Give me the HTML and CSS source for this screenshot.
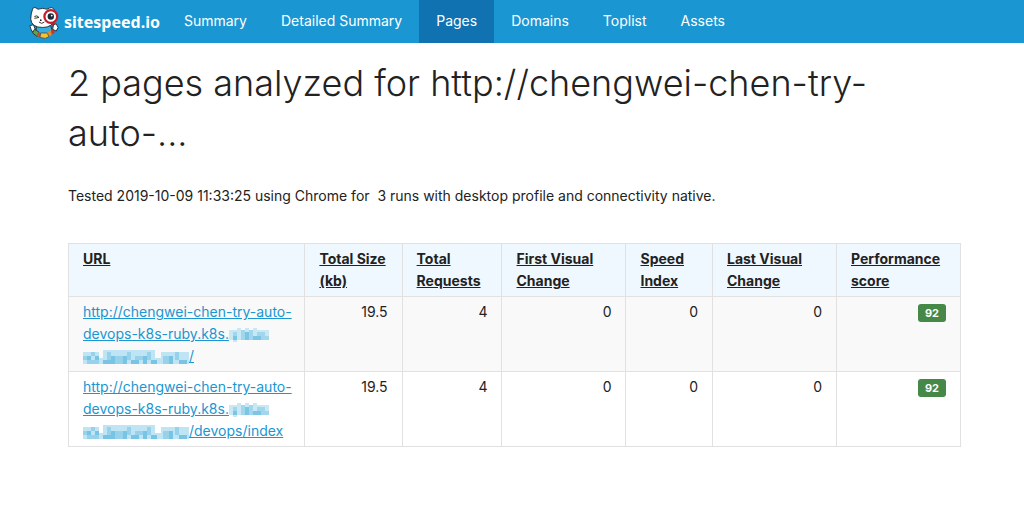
FILE: index.html
```
<!DOCTYPE html>
<html lang="en">
<head>
  <meta charset="UTF-8">
  <meta name="viewport" content="width=device-width, initial-scale=1.0">
  <title>2 pages analyzed - sitespeed.io</title>
  <link rel="stylesheet" href="styles.css">
</head>
<body>

  <nav class="navbar">
    <a href="#" class="brand">
      <svg class="logo" viewBox="0 0 34 36" aria-hidden="true">
        <path d="M6 21 L2 22 L4 28 L9 29 Z" fill="#fff" stroke="#1b3545" stroke-width="1"/>
        <path d="M10 22 H25 L27 30 Q18 35 8 30 Z" fill="#36aee0" stroke="#1b3545" stroke-width="1"/>
        <path d="M7 26 L12 29 L10 34 L5 30 Z" fill="#58a844" stroke="#333" stroke-width="1"/>
        <path d="M12 29 L15 31 L14 35 L9 33 Z" fill="#d8472a"/>
        <path d="M14 30 H21 L23 34 L19 36 L13 35 Z" fill="#f4c430" stroke="#555" stroke-width="1"/>
        <path d="M21 30 L25 27 L28 30 L24 34 Z" fill="#e68a28"/>
        <path d="M25 26 L29 25 L29 30 L26 32 Z" fill="#c9342a"/>
        <path d="M5 4 Q6 0 11 4 Q16 2 21 4 Q27 0 29 5 L29 15 Q27 24 16 24 Q4 24 3 15 Q3 9 5 4 Z" fill="#fff" stroke="#1b2b35" stroke-width="1"/>
        <path d="M7 12 Q10 10 12 13 L7 14 M12 18 Q15 21 18 18" fill="none" stroke="#222" stroke-width="1"/>
        <circle cx="14" cy="16" r="1" fill="#222"/>
        <path d="M27 18 L29 24" stroke="#c41c2c" stroke-width="3"/>
        <circle cx="25" cy="12" r="7" fill="#fff" stroke="#c41c2c" stroke-width="2.5"/>
        <circle cx="25" cy="12" r="3.5" fill="#1b2b35"/>
        <circle cx="26" cy="11" r="1" fill="#fff"/>
        <path d="M28 21 L31 20 L33 24 L31 28 L27 26 Z" fill="#fff" stroke="#1b2b35" stroke-width="1"/>
      </svg>
      <span>sitespeed.io</span>
    </a>
    <a href="#" class="nav-link">Summary</a>
    <a href="#" class="nav-link">Detailed Summary</a>
    <a href="#" class="nav-link active">Pages</a>
    <a href="#" class="nav-link">Domains</a>
    <a href="#" class="nav-link">Toplist</a>
    <a href="#" class="nav-link">Assets</a>
  </nav>

  <!-- mosaic blocks that hide part of the host name -->
  <svg class="sprite" aria-hidden="true">
    <symbol id="mosaic-short" viewBox="0 0 40 14">
      <path d="M0 2h40v10H0zM8 0h4v2H8zM16 0h4v2h-4zM24 0h4v2h-4zM4 12h4v2H4z" fill="#c8e8f4"/>
      <path d="M4 4h4v8H4zM12 2h4v10h-4zM20 2h4v10h-4zM28 4h8v8h-8zM36 8h4v4h-4z" fill="#a2d6ec"/>
      <path d="M4 8h4v4H4zM16 4h4v8h-4zM24 8h8v4h-8z" fill="#7cc5e4"/>
    </symbol>
    <symbol id="mosaic-long" viewBox="0 0 106 14">
      <path d="M0 2h16v12H0zM16 8h8v6h-8zM20 0h52v14H20zM72 8h6v6h-6zM78 2h28v12H78z" fill="#bfe4f3"/>
      <path d="M0 6h4v4H0zM8 2h4v4H8zM4 10h12v4H4zM24 2h4v8h-4zM32 6h8v8h-8zM44 2h4v8h-4zM52 6h8v4h-8zM64 2h4v8h-4zM80 6h6v8h-6zM92 2h4v8h-4z" fill="#97d1ea"/>
      <path d="M4 6h4v4H4zM12 6h4v4h-4zM20 10h12v4H20zM28 6h4v4h-4zM40 6h4v8h-4zM48 10h8v4h-8zM60 6h4v8h-4zM68 10h6v4h-6zM86 6h4v8h-4zM96 10h8v4h-8z" fill="#78c4e4"/>
    </symbol>
  </svg>

  <main class="container">
    <h1>2 pages analyzed for http://chengwei-chen-try-auto-...</h1>
    <p class="tested">Tested 2019-10-09 11:33:25 using Chrome for &nbsp;3 runs with desktop profile and connectivity native.</p>

    <table>
      <thead>
        <tr>
          <th class="url">URL</th>
          <th class="size">Total Size (kb)</th>
          <th class="requests">Total Requests</th>
          <th class="visual">First Visual Change</th>
          <th class="speed">Speed Index</th>
          <th class="visual">Last Visual Change</th>
          <th class="score">Performance score</th>
        </tr>
      </thead>
      <tbody>
        <tr>
          <td><a href="#">http://chengwei-chen-try-auto-<br>devops-k8s-ruby.k8s.<svg class="mosaic short"><use href="#mosaic-short"/></svg><br><svg class="mosaic long"><use href="#mosaic-long"/></svg>/</a></td>
          <td class="number">19.5</td>
          <td class="number">4</td>
          <td class="number">0</td>
          <td class="number">0</td>
          <td class="number">0</td>
          <td class="number"><span class="label">92</span></td>
        </tr>
        <tr>
          <td><a href="#">http://chengwei-chen-try-auto-<br>devops-k8s-ruby.k8s.<svg class="mosaic short"><use href="#mosaic-short"/></svg><br><svg class="mosaic long"><use href="#mosaic-long"/></svg>/devops/index</a></td>
          <td class="number">19.5</td>
          <td class="number">4</td>
          <td class="number">0</td>
          <td class="number">0</td>
          <td class="number">0</td>
          <td class="number"><span class="label">92</span></td>
        </tr>
      </tbody>
    </table>
  </main>

</body>
</html>
```
FILE: styles.css
```
body {
  margin: 0;
  background-color: #fff;
  color: #222;
  font-family: Inter, "Liberation Sans", sans-serif;
  font-size: 14px;
  line-height: 22px;
}
.navbar {
  display: flex;
  background-color: #1a96d2;
  padding-left: 28px;
}
.navbar a {
  color: #fff;
  text-decoration: none;
}
.brand {
  display: flex;
  align-items: center;
  gap: 5px;
  margin-right: 7px;
  font-family: "Noto Sans", sans-serif;
  font-size: 16px;
  font-weight: bold;
}
.logo {
  width: 31px;
  height: 34px;
}
.nav-link {
  padding: 10px 17px 11px;
}
.nav-link.active {
  background-color: #1072b0;
}
.container {
  padding: 15px 63px 40px 68px;
}
h1 {
  max-width: 860px;
  margin: 0 0 27px;
  font-size: 36px;
  font-weight: 300;
  line-height: 50px;
}
.tested {
  margin: 0 0 36px;
}
table {
  width: 100%;
  border-collapse: collapse;
  table-layout: fixed;
}
th, td {
  box-sizing: border-box;
  padding: 4px 14px;
  border: 1px solid #e1e1e1;
  text-align: left;
  vertical-align: top;
}
th {
  background-color: #f0f8ff;
  text-decoration: underline;
}
td a {
  color: #1a96d2;
  white-space: nowrap;
}
tbody tr {
  height: 75px;
}
tbody tr:nth-child(odd) {
  background-color: #f9f9f9;
}
.url {
  width: 26.5%;
}
.size {
  width: 10.9%;
}
.requests {
  width: 11.2%;
}
.visual, .score {
  width: 13.9%;
}
.speed {
  width: 9.7%;
}
td.number {
  text-align: right;
}
.label {
  display: inline-block;
  padding: 0 7px;
  border-radius: 3px;
  background-color: #468847;
  color: #fff;
  font-size: 11px;
  font-weight: bold;
  line-height: 18px;
}
.sprite {
  display: none;
}
.mosaic {
  height: 14px;
  vertical-align: -3px;
}
.mosaic.short {
  width: 40px;
}
.mosaic.long {
  width: 106px;
}
```
